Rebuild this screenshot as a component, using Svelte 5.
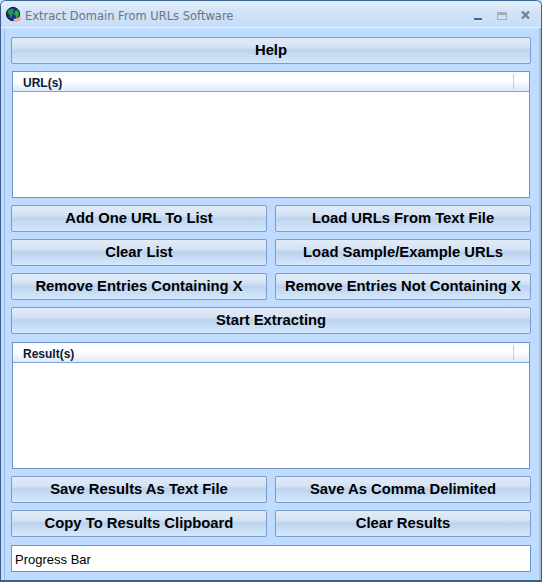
<script>
  const urlActions = [
    "Add One URL To List",
    "Load URLs From Text File",
    "Clear List",
    "Load Sample/Example URLs",
    "Remove Entries Containing X",
    "Remove Entries Not Containing X"
  ];
  const resultActions = [
    "Save Results As Text File",
    "Save As Comma Delimited",
    "Copy To Results Clipboard",
    "Clear Results"
  ];
</script>

<div class="window">
  <header class="titlebar">
    <svg class="appicon" viewBox="0 0 18 16" width="18" height="16">
      <circle cx="8" cy="7" r="6.600" fill="#12309c" stroke="#0c1526" stroke-width="1" />
      <path d="M4 2.500l3-1 2 1-1 2 1 1.500-1.500 1.500-.5 2.500-1.500 1-.5-3-2-1.500-.5-2z" fill="#1f9a3a" />
      <path d="M10 4l2.500-1 1.500 3-.5 3-2 2.500-1-3-1.500-1.500z" fill="#27ad4c" />
      <path d="M8 12.500l4-1.500 3-1.200 1 1.200-1.500 3-3 .8h-2z" fill="#f2a796" />
    </svg>
    <span class="title">Extract Domain From URLs Software</span>
    <div class="controls">
      <svg viewBox="0 0 12 12" width="12" height="12"><rect x="1" y="8" width="8" height="2" fill="#3f6a9a" /><rect x="1" y="10" width="8" height="1" fill="#dbe9f8" /></svg>
      <svg viewBox="0 0 12 12" width="12" height="12"><rect x="0.500" y="2.500" width="9" height="7" fill="none" stroke="#a8aeb8" /><rect x="1" y="3" width="8" height="2" fill="#a8aeb8" /></svg>
      <svg viewBox="0 0 12 12" width="12" height="12"><path d="M1 1.500l7 7M8 1.500l-7 7" stroke="#6f8296" stroke-width="2.400" fill="none" /></svg>
    </div>
  </header>

  <main class="client">
    <button class="btn">Help</button>

    <section class="listview">
      <div class="listhead"><span class="col">URL(s)</span><span class="col rest"></span></div>
    </section>

    <div class="pair">
      {#each urlActions as label}
        <button class="btn">{label}</button>
      {/each}
    </div>

    <button class="btn">Start Extracting</button>

    <section class="listview second">
      <div class="listhead"><span class="col">Result(s)</span><span class="col rest"></span></div>
    </section>

    <div class="pair">
      {#each resultActions as label}
        <button class="btn">{label}</button>
      {/each}
    </div>

    <div class="progress">Progress Bar</div>
  </main>
</div>

<style>
  :global(body) {
    margin: 0;
    background: #bfdbff;
  }

  .window {
    width: 542px;
    height: 582px;
    box-sizing: border-box;
    display: flex;
    flex-direction: column;
    overflow: hidden;
    border: 1px solid #3a5f8c;
    border-top-color: #3d6594;
    border-bottom-width: 2px;
    border-radius: 6px 6px 0 0;
    background: #bfdbff;
    font-family: "Liberation Sans", Arial, sans-serif;
  }

  .titlebar {
    height: 27px;
    flex: none;
    display: flex;
    align-items: center;
    padding: 4px 8px 0 4px;
    box-sizing: border-box;
    gap: 2px;
    background: linear-gradient(#e3eefb, #cfe2f8 50%, #c8ddf7);
    border-bottom: 1px solid #eaf3fd;
  }

  .appicon {
    flex: none;
    align-self: flex-start;
    margin-top: 2px;
  }

  .title {
    font-family: "DejaVu Sans", Verdana, sans-serif;
    font-size: 11.500px;
    color: #6d7580;
    flex: 1;
  }

  .controls {
    display: flex;
    gap: 12px;
    align-self: flex-start;
    margin-top: 5px;
  }

  .client {
    flex: 1;
    display: flex;
    flex-direction: column;
    gap: 7px;
    padding: 9px 8px 8px 6px;
    margin-left: 3px;
    border-left: 1px solid #9dbde6;
    border-right: 2px solid #aabfdc;
  }

  .btn {
    height: 27px;
    padding: 0 0 2px;
    box-sizing: border-box;
    border: 1px solid #7d9ccb;
    border-radius: 2px;
    background: linear-gradient(#e2ecf8 0, #d5e3f4 35%, #bcd3ee 50%, #c6dcf5 70%, #d5e9fc 100%);
    font-family: inherit;
    font-size: 14.800px;
    font-weight: bold;
    color: #000;
    white-space: nowrap;
  }

  .listview {
    height: 127px;
    flex: none;
    margin: 0 1px;
    box-sizing: border-box;
    border: 1px solid #6f93c4;
    background: #fff;
  }

  .second {
    margin-top: 1px;
  }

  .listhead {
    height: 20px;
    display: flex;
    box-sizing: border-box;
    border-bottom: 1px solid #7fa3d3;
    background: linear-gradient(#f8fbff, #ffffff 45%, #dbe9fb);
    font-size: 12px;
    font-weight: bold;
    color: #0a1a30;
  }

  .col {
    width: 501px;
    padding: 2px 0 0 10px;
    box-sizing: border-box;
    border-right: 1px solid #b4cdf0;
    margin: 2px 0;
    line-height: 14px;
  }

  .rest {
    flex: 1;
    border-right: 0;
  }

  .pair {
    display: grid;
    grid-template-columns: 256px 256px;
    gap: 7px 8px;
  }

  .progress {
    margin-top: 1px;
    height: 27px;
    box-sizing: border-box;
    display: flex;
    align-items: center;
    padding: 1px 0 0 3px;
    background: #fff;
    border: 1px solid #6f93c4;
    font-size: 13px;
    color: #000;
  }
</style>
